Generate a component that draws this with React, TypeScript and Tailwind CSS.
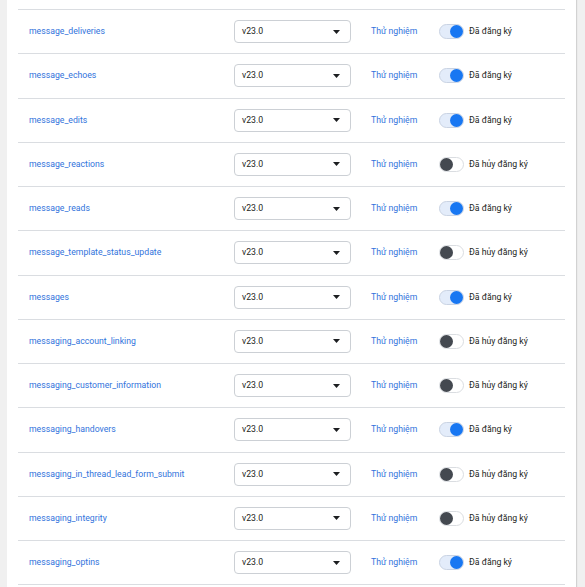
const ROWS: { name: string; on: boolean }[] = [
  { name: "message_deliveries", on: true },
  { name: "message_echoes", on: true },
  { name: "message_edits", on: true },
  { name: "message_reactions", on: false },
  { name: "message_reads", on: true },
  { name: "message_template_status_update", on: false },
  { name: "messages", on: true },
  { name: "messaging_account_linking", on: false },
  { name: "messaging_customer_information", on: false },
  { name: "messaging_handovers", on: true },
  { name: "messaging_in_thread_lead_form_submit", on: false },
  { name: "messaging_integrity", on: false },
  { name: "messaging_optins", on: true },
];

function Toggle({ on }: { on: boolean }) {
  return (
    <div
      className={
        on
          ? "relative h-[15px] w-[25px] rounded-full border border-[#c9d3e3] bg-[#e3ecfa]"
          : "relative h-[15px] w-[25px] rounded-full border border-[#dadde1] bg-white"
      }
    >
      <div
        className={
          on
            ? "absolute right-0 top-0 h-[13px] w-[13px] rounded-full bg-[#1877f2]"
            : "absolute left-0 top-0 h-[13px] w-[13px] rounded-full bg-[#444950]"
        }
      />
    </div>
  );
}

export default function App() {
  return (
    <div
      className="h-[587px] w-[585px] overflow-hidden bg-[#f0f0f0] pl-[7px] pr-[9px]"
      style={{ fontFamily: "Roboto, 'Liberation Sans', sans-serif" }}
    >
      <div className="h-full bg-white px-[11px] pt-[9px] shadow-[1px_0_1px_rgba(0,0,0,0.12)]">
        <div className="border-t border-[#dadde1]">
          {ROWS.map((row) => (
            <div
              key={row.name}
              className="flex h-[44.25px] items-center border-b border-[#dadde1] text-[8.7px]"
            >
              <div className="w-[216px] pl-[11px] text-[#3273dc]">{row.name}</div>
              <div className="flex h-[23px] w-[117px] items-center justify-between rounded-[4px] border border-[#ccd0d5] pl-[7px] pr-[10px] text-[#1c1e21]">
                <span>v23.0</span>
                <svg width="7" height="4" viewBox="0 0 7 4">
                  <path d="M0 0h7L3.5 4z" fill="#1c1e21" />
                </svg>
              </div>
              <div className="ml-[20px] w-[68px] text-[#3273dc]">Thử nghiệm</div>
              <Toggle on={row.on} />
              <span className="ml-[5px] text-[#1c1e21]">
                {row.on ? "Đã đăng ký" : "Đã hủy đăng ký"}
              </span>
            </div>
          ))}
        </div>
      </div>
    </div>
  );
}
